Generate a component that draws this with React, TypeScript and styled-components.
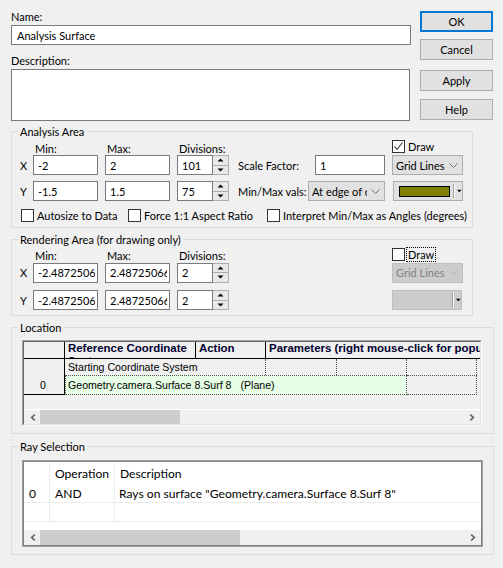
import React from "react";
import styled, { createGlobalStyle } from "styled-components";

const GlobalStyle = createGlobalStyle`
  html, body {
    margin: 0;
    padding: 0;
    background: #f0f0f0;
  }
  body {
    font-family: Lato, "Segoe UI", sans-serif;
    font-size: 11px;
    color: #000;
  }
  * {
    box-sizing: border-box;
  }
`;

const Dialog = styled.div`
  width: 503px;
  height: 568px;
  padding: 9px 0 0 11px;
  overflow: hidden;
`;

const Top = styled.div`
  display: flex;
`;

const FormCol = styled.div`
  width: 400px;
  display: flex;
  flex-direction: column;
`;

const Label = styled.div<{ $mt?: number }>`
  line-height: 15px;
  margin-top: ${(p) => p.$mt ?? 0}px;
`;

const TextBox = styled.input<{ $w: number; $pl?: number }>`
  width: ${(p) => p.$w}px;
  height: 20px;
  flex-shrink: 0;
  border: 1px solid #7a7a7a;
  background: #fff;
  padding: 0 2px 0 ${(p) => p.$pl ?? 4}px;
  margin: 0;
  font: inherit;
  color: #000;
  outline: none;
`;

const TextArea = styled.textarea`
  width: 399px;
  height: 52px;
  margin: 1px 0 0;
  border: 1px solid #7a7a7a;
  background: #fff;
  resize: none;
  outline: none;
  font: inherit;
`;

const ButtonCol = styled.div`
  margin-left: 9px;
  width: 73px;
  display: flex;
  flex-direction: column;
`;

const Button = styled.button<{ $default?: boolean; $mt: number }>`
  height: 21px;
  margin-top: ${(p) => p.$mt}px;
  padding: 0;
  background: #e1e1e1;
  border: ${(p) => (p.$default ? "2px solid #0078d7" : "1px solid #adadad")};
  font: inherit;
  color: #000;
`;

const Group = styled.fieldset<{ $w: number; $mt: number; $pb: number }>`
  width: ${(p) => p.$w}px;
  min-width: 0;
  margin: ${(p) => p.$mt}px 0 0 0;
  padding: 0 0 ${(p) => p.$pb}px 0;
  border: 1px solid #dcdcdc;
`;

const Legend = styled.legend`
  margin-left: 6px;
  padding: 0 2px;
  line-height: 15px;
`;

const Row = styled.div<{ $h: number; $mt?: number; $end?: boolean }>`
  display: flex;
  align-items: ${(p) => (p.$end ? "flex-end" : "center")};
  height: ${(p) => p.$h}px;
  margin-top: ${(p) => p.$mt ?? 0}px;
  padding-left: 8px;
`;

const Axis = styled.span`
  width: 13px;
  flex-shrink: 0;
`;

const HeadLabel = styled.span<{ $w: number; $ml?: number }>`
  width: ${(p) => p.$w}px;
  margin-left: ${(p) => p.$ml ?? 0}px;
  padding-left: 2px;
  line-height: 13px;
  flex-shrink: 0;
`;

const Gap = styled.span<{ $w: number }>`
  width: ${(p) => p.$w}px;
  flex-shrink: 0;
`;

const FieldLabel = styled.span<{ $w: number }>`
  width: ${(p) => p.$w}px;
  flex-shrink: 0;
  white-space: nowrap;
`;

/* spin edit */
const Spin = styled.div`
  display: flex;
  width: 52px;
  height: 20px;
  flex-shrink: 0;
`;

const SpinButtons = styled.div`
  width: 16px;
  display: flex;
  flex-direction: column;
  border: 1px solid #adadad;
  border-left: none;
  background: #e9e9e9;
`;

const SpinHalf = styled.div<{ $top?: boolean }>`
  flex: 1;
  display: flex;
  align-items: center;
  justify-content: center;
  border-bottom: ${(p) => (p.$top ? "1px solid #adadad" : "none")};
`;

function SpinEdit({ value }: { value: string }) {
  return (
    <Spin>
      <TextBox $w={36} value={value} readOnly />
      <SpinButtons>
        <SpinHalf $top>
          <svg width="7" height="4" viewBox="0 0 7 4">
            <path d="M0.5 3.5 L3.5 0.5 L6.5 3.5 Z" fill="#000" />
          </svg>
        </SpinHalf>
        <SpinHalf>
          <svg width="7" height="4" viewBox="0 0 7 4">
            <path d="M0.5 0.5 L3.5 3.5 L6.5 0.5 Z" fill="#000" />
          </svg>
        </SpinHalf>
      </SpinButtons>
    </Spin>
  );
}

/* combo boxes */
const Combo = styled.div<{ $w: number; $ml?: number; $disabled?: boolean }>`
  width: ${(p) => p.$w}px;
  height: 20px;
  margin-left: ${(p) => p.$ml ?? 0}px;
  flex-shrink: 0;
  display: flex;
  align-items: center;
  padding-left: 3px;
  background: ${(p) => (p.$disabled ? "#cccccc" : "#e1e1e1")};
  border: 1px solid ${(p) => (p.$disabled ? "#bfbfbf" : "#adadad")};
  color: ${(p) => (p.$disabled ? "#838383" : "#000")};
`;

const ComboText = styled.span`
  flex: 1;
  overflow: hidden;
  white-space: nowrap;
`;

const Chevron = styled.svg`
  margin: 0 4px 0 4px;
  flex-shrink: 0;
`;

function DropCombo({
  text,
  w,
  ml,
  disabled,
}: {
  text: string;
  w: number;
  ml?: number;
  disabled?: boolean;
}) {
  return (
    <Combo $w={w} $ml={ml} $disabled={disabled}>
      <ComboText>{text}</ComboText>
      <Chevron width="9" height="5" viewBox="0 0 9 5">
        <path d="M0.5 0.5 L4.5 4.5 L8.5 0.5" fill="none" stroke={disabled ? "#b5b5b5" : "#707070"} />
      </Chevron>
    </Combo>
  );
}

const Swatch = styled.span<{ $color?: string }>`
  width: 51px;
  height: 11px;
  margin-left: 2px;
  flex-shrink: 0;
  background: ${(p) => p.$color ?? "transparent"};
  border: ${(p) => (p.$color ? "1px solid #000" : "none")};
`;

const Divider = styled.span`
  width: 2px;
  height: 14px;
  margin-left: 3px;
  border-left: 1px solid #a0a0a0;
  border-right: 1px solid #fff;
`;

const Arrow = styled.svg`
  margin-left: 2px;
`;

function ColorCombo({ color, disabled }: { color?: string; disabled?: boolean }) {
  return (
    <Combo $w={70} $ml={8} $disabled={disabled}>
      <Swatch $color={color} />
      <Divider />
      <Arrow width="6" height="4" viewBox="0 0 6 4">
        <path d="M0 0.5 L5.5 0.5 L2.75 3.5 Z" fill="#000" />
      </Arrow>
    </Combo>
  );
}

/* check boxes */
const CheckItem = styled.span<{ $w?: number; $ml?: number; $top?: boolean }>`
  display: inline-flex;
  align-items: center;
  gap: 3px;
  width: ${(p) => (p.$w ? `${p.$w}px` : "auto")};
  margin-left: ${(p) => p.$ml ?? 0}px;
  align-self: ${(p) => (p.$top ? "flex-start" : "center")};
  margin-top: ${(p) => (p.$top ? 1 : 0)}px;
  flex-shrink: 0;
  white-space: nowrap;
  line-height: 13px;
`;

const Box = styled.span`
  width: 13px;
  height: 13px;
  border: 1px solid #333;
  background: #fff;
  display: inline-flex;
  align-items: center;
  justify-content: center;
  flex-shrink: 0;
`;

const Focus = styled.span`
  outline: 1px dotted #000;
  outline-offset: 0;
  padding: 0 1px;
  margin-left: -1px;
`;

function Check({
  label,
  checked,
  focused,
  w,
  ml,
  top,
}: {
  label: string;
  checked?: boolean;
  focused?: boolean;
  w?: number;
  ml?: number;
  top?: boolean;
}) {
  return (
    <CheckItem $w={w} $ml={ml} $top={top}>
      <Box>
        {checked && (
          <svg width="11" height="11" viewBox="0 0 11 11">
            <path d="M1.5 5.5 L4 8.5 L9.5 1.5" fill="none" stroke="#333" strokeWidth="1.1" />
          </svg>
        )}
      </Box>
      {focused ? <Focus>{label}</Focus> : <span>{label}</span>}
    </CheckItem>
  );
}

/* location grid */
const GridFrame = styled.div`
  margin: 5px 0 0 10px;
  width: 460px;
  height: 86px;
  border: 1px solid;
  border-color: #a0a0a0 #ffffff #ffffff #a0a0a0;
  font-family: "Liberation Sans", Arial, sans-serif;
`;

const GridInner = styled.div`
  height: 100%;
  display: flex;
  flex-direction: column;
  border: 1px solid;
  border-color: #696969 #e3e3e3 #e3e3e3 #696969;
  background: #f0f0f0;
  overflow: hidden;
`;

const GridHead = styled.div`
  display: flex;
  height: 17px;
  flex-shrink: 0;
  border-bottom: 1px solid #000;
`;

const HeadCell = styled.div<{ $w?: number; $nowrap?: boolean }>`
  width: ${(p) => (p.$w ? `${p.$w}px` : "auto")};
  flex: ${(p) => (p.$w ? "none" : "1")};
  border-right: ${(p) => (p.$w ? "1px solid #000" : "none")};
  padding-left: 3px;
  font-weight: bold;
  font-size: 11.45px;
  line-height: 13px;
  color: #000030;
  white-space: ${(p) => (p.$nowrap ? "nowrap" : "normal")};
  overflow: hidden;
`;

const GridBody = styled.div`
  display: flex;
  height: 36px;
  flex-shrink: 0;
`;

const RowHead = styled.div`
  width: 41px;
  flex-shrink: 0;
  border-right: 1px solid #000;
  border-bottom: 1px solid #000;
  display: flex;
  align-items: flex-end;
  justify-content: center;
  padding: 0 2px 2px 0;
  font-size: 10.6px;
  line-height: 13px;
`;

const GridRows = styled.div`
  flex: 1;
  display: flex;
  flex-direction: column;
`;

const GridRow = styled.div<{ $h: number }>`
  display: flex;
  height: ${(p) => p.$h}px;
`;

const GridCell = styled.div<{ $w?: number; $boxed?: boolean; $green?: boolean }>`
  width: ${(p) => (p.$w ? `${p.$w}px` : "auto")};
  flex: ${(p) => (p.$w ? "none" : "1")};
  border-right: ${(p) => (p.$w ? "1px dotted #505050" : "none")};
  border-top: ${(p) => (p.$boxed ? "1px dotted #505050" : "none")};
  border-bottom: ${(p) => (p.$boxed ? "1px dotted #505050" : "none")};
  border-left: ${(p) => (p.$green ? "1px dotted #505050" : "none")};
  background: ${(p) => (p.$green ? "#e6ffe6" : "transparent")};
  padding-left: ${(p) => (p.$green ? 2 : 3)}px;
  font-size: 10.6px;
  display: flex;
  align-items: center;
  white-space: nowrap;
  overflow: ${(p) => (p.$w ? "visible" : "hidden")};
`;

const Plane = styled.span`
  margin-left: 9px;
`;

const Filler = styled.div`
  flex: 1;
`;

const ScrollBar = styled.div<{ $line?: boolean }>`
  height: 15px;
  flex-shrink: 0;
  display: flex;
  align-items: stretch;
  background: #f0f0f0;
  border-top: ${(p) => (p.$line ? "1px solid #fff" : "none")};
`;

const ScrollBtn = styled.div`
  width: 17px;
  flex-shrink: 0;
  display: flex;
  align-items: center;
  justify-content: center;
`;

const Thumb = styled.div<{ $w: number }>`
  width: ${(p) => p.$w}px;
  margin: 0 0 0 -1px;
  background: #cdcdcd;
`;

function Scroller({ thumb, line }: { thumb: number; line?: boolean }) {
  return (
    <ScrollBar $line={line}>
      <ScrollBtn>
        <svg width="6" height="7" viewBox="0 0 6 7">
          <path d="M4.8 0.6 L1.6 3.5 L4.8 6.4" fill="none" stroke="#606060" strokeWidth="1.6" />
        </svg>
      </ScrollBtn>
      <Thumb $w={thumb} />
      <Filler />
      <ScrollBtn>
        <svg width="6" height="7" viewBox="0 0 6 7">
          <path d="M1.2 0.6 L4.4 3.5 L1.2 6.4" fill="none" stroke="#606060" strokeWidth="1.6" />
        </svg>
      </ScrollBtn>
    </ScrollBar>
  );
}

/* ray selection list */
const ListFrame = styled.div`
  margin: 6px 0 0 10px;
  width: 461px;
  height: 87px;
  border: 1px solid #a0a0a0;
  background: #fff;
`;

const ListInner = styled.div`
  height: 100%;
  display: flex;
  flex-direction: column;
  border: 1px solid #828282;
  font-size: 12.1px;
`;

const ListRow = styled.div<{ $h: number; $line?: boolean }>`
  display: flex;
  height: ${(p) => p.$h}px;
  flex-shrink: 0;
  border-bottom: ${(p) => (p.$line ? "1px solid #ececec" : "none")};
`;

const ListCell = styled.div<{ $w?: number; $pl: number }>`
  width: ${(p) => (p.$w ? `${p.$w}px` : "auto")};
  flex: ${(p) => (p.$w ? "none" : "1")};
  border-right: ${(p) => (p.$w ? "1px solid #ececec" : "none")};
  padding-left: ${(p) => p.$pl}px;
  display: flex;
  align-items: center;
  white-space: nowrap;
  overflow: hidden;
`;

export default function App() {
  return (
    <>
      <GlobalStyle />
      <Dialog>
        <Top>
          <FormCol>
            <Label>Name:</Label>
            <TextBox $w={400} $pl={5} value="Analysis Surface" readOnly style={{ marginTop: 1 }} />
            <Label $mt={8}>Description:</Label>
            <TextArea readOnly value="" />
          </FormCol>
          <ButtonCol>
            <Button $default $mt={2}>OK</Button>
            <Button $mt={7}>Cancel</Button>
            <Button $mt={10}>Apply</Button>
            <Button $mt={8}>Help</Button>
          </ButtonCol>
        </Top>

        <Group $w={462} $mt={3} $pb={5}>
          <Legend>Analysis Area</Legend>
          <Row $h={16} $end>
            <Axis />
            <HeadLabel $w={65}>Min:</HeadLabel>
            <HeadLabel $w={65} $ml={7}>Max:</HeadLabel>
            <HeadLabel $w={52} $ml={7}>Divisions:</HeadLabel>
            <Check label="Draw" checked ml={163} top />
          </Row>
          <Row $h={20}>
            <Axis>X</Axis>
            <TextBox $w={65} value="-2" readOnly />
            <Gap $w={7} />
            <TextBox $w={65} value="2" readOnly />
            <Gap $w={7} />
            <SpinEdit value="101" />
            <Gap $w={9} />
            <FieldLabel $w={77}>Scale Factor:</FieldLabel>
            <TextBox $w={70} value="1" readOnly />
            <DropCombo text="Grid Lines" w={71} ml={7} />
          </Row>
          <Row $h={20} $mt={6}>
            <Axis>Y</Axis>
            <TextBox $w={65} value="-1.5" readOnly />
            <Gap $w={7} />
            <TextBox $w={65} value="1.5" readOnly />
            <Gap $w={7} />
            <SpinEdit value="75" />
            <Gap $w={9} />
            <FieldLabel $w={70}>Min/Max vals:</FieldLabel>
            <Combo $w={77}>
              <ComboText>At edge of cell</ComboText>
              <Chevron width="9" height="5" viewBox="0 0 9 5">
                <path d="M0.5 0.5 L4.5 4.5 L8.5 0.5" fill="none" stroke="#707070" />
              </Chevron>
            </Combo>
            <ColorCombo color="#808000" />
          </Row>
          <Row $h={13} $mt={8}>
            <Check label="Autosize to Data" w={107} ml={1} />
            <Check label="Force 1:1 Aspect Ratio" w={139} />
            <Check label="Interpret Min/Max as Angles (degrees)" />
          </Row>
        </Group>

        <Group $w={462} $mt={4} $pb={5}>
          <Legend>Rendering Area (for drawing only)</Legend>
          <Row $h={15} $end>
            <Axis />
            <HeadLabel $w={65}>Min:</HeadLabel>
            <HeadLabel $w={65} $ml={7}>Max:</HeadLabel>
            <HeadLabel $w={52} $ml={7}>Divisions:</HeadLabel>
            <Check label="Draw" focused ml={163} top />
          </Row>
          <Row $h={21}>
            <Axis>X</Axis>
            <TextBox $w={65} value="-2.48725066" readOnly />
            <Gap $w={7} />
            <TextBox $w={65} value="2.48725066" readOnly />
            <Gap $w={7} />
            <SpinEdit value="2" />
            <Gap $w={163} />
            <DropCombo text="Grid Lines" w={71} disabled />
          </Row>
          <Row $h={20} $mt={7}>
            <Axis>Y</Axis>
            <TextBox $w={65} value="-2.48725066" readOnly />
            <Gap $w={7} />
            <TextBox $w={65} value="2.48725066" readOnly />
            <Gap $w={7} />
            <SpinEdit value="2" />
            <Gap $w={155} />
            <ColorCombo disabled />
          </Row>
        </Group>

        <Group $w={483} $mt={4} $pb={7}>
          <Legend>Location</Legend>
          <GridFrame>
            <GridInner>
              <GridHead>
                <HeadCell $w={41} />
                <HeadCell $w={131}>Reference Coordinate System</HeadCell>
                <HeadCell $w={70}>Action</HeadCell>
                <HeadCell $nowrap>Parameters (right mouse-click for popup menu)</HeadCell>
              </GridHead>
              <GridBody>
                <RowHead>0</RowHead>
                <GridRows>
                  <GridRow $h={16}>
                    <GridCell $w={201}>Starting Coordinate System</GridCell>
                    <GridCell $w={71} />
                    <GridCell $w={70} />
                    <GridCell $w={70} />
                    <GridCell />
                  </GridRow>
                  <GridRow $h={20}>
                    <GridCell $w={342} $boxed $green>
                      Geometry.camera.Surface 8.Surf 8<Plane>(Plane)</Plane>
                    </GridCell>
                    <GridCell $w={70} $boxed />
                    <GridCell />
                  </GridRow>
                </GridRows>
              </GridBody>
              <Filler />
              <Scroller thumb={140} line />
            </GridInner>
          </GridFrame>
        </Group>

        <Group $w={483} $mt={5} $pb={7}>
          <Legend>Ray Selection</Legend>
          <ListFrame>
            <ListInner>
              <ListRow $h={22}>
                <ListCell $w={26} $pl={6} />
                <ListCell $w={65} $pl={5}>Operation</ListCell>
                <ListCell $pl={5}>Description</ListCell>
              </ListRow>
              <ListRow $h={19} $line>
                <ListCell $w={26} $pl={5}>0</ListCell>
                <ListCell $w={65} $pl={5}>AND</ListCell>
                <ListCell $pl={4}>Rays on surface "Geometry.camera.Surface 8.Surf 8"</ListCell>
              </ListRow>
              <ListRow $h={19} $line>
                <ListCell $w={26} $pl={5} />
                <ListCell $w={65} $pl={5} />
                <ListCell $pl={4} />
              </ListRow>
              <Filler />
              <Scroller thumb={200} />
            </ListInner>
          </ListFrame>
        </Group>
      </Dialog>
    </>
  );
}
